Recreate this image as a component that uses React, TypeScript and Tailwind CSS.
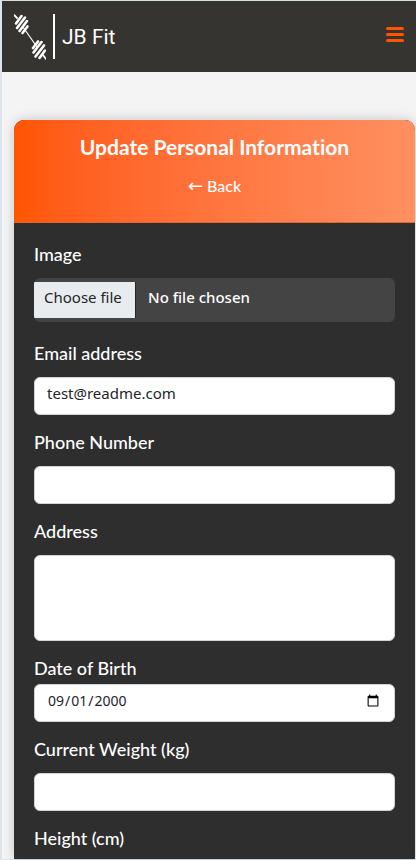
import { useId, useState } from "react";
import type { InputHTMLAttributes } from "react";

const controlClass =
  "block w-full rounded-md border border-[#ced4da] bg-white px-3 font-['Noto_Sans',sans-serif] font-normal text-[#212529]";

const labelClass = "h-[27px] leading-[22px]";

function Logo() {
  return (
    <a href="#" aria-label="JB Fit home" className="flex h-[46px] items-center gap-[7px] text-white">
      <svg width="32" height="46" viewBox="0 0 32 46" fill="none" stroke="currentColor" strokeLinecap="round">
        <path d="M9 13 23 33" strokeWidth="1.2" />
        <path d="M0 1 3 4M29 41 32 45" strokeWidth="1.8" />
        <path d="M2 9.500 7.500 2M3 14 11 3.500M5.500 17 13 7M8.500 19 13.500 12.500" strokeWidth="2.6" />
        <path d="M19 34 24 27.500M19.500 38.500 27.500 28M21.500 42.500 30 31.500M25.500 44 31 36.500" strokeWidth="2.6" />
      </svg>
      <span className="h-[45px] w-0.5 bg-white" />
      <span className="font-['Roboto',sans-serif] text-[21px] leading-[46px] whitespace-nowrap">JB Fit</span>
    </a>
  );
}

type FieldProps = InputHTMLAttributes<HTMLInputElement> & { label: string; tight?: boolean };

function Field({ label, tight, type, ...rest }: FieldProps) {
  const id = useId();
  return (
    <div className={tight ? "flex flex-col" : "flex flex-col gap-2"}>
      <label htmlFor={id} className={labelClass}>
        {label}
      </label>
      <input
        id={id}
        type={type}
        className={`${controlClass} h-[38px] ${type === "date" ? "pb-1 text-sm" : "pb-1.5 text-[15px]"}`}
        {...rest}
      />
    </div>
  );
}

function ImageField() {
  const id = useId();
  const [name, setName] = useState("No file chosen");
  return (
    <div className="mb-1 flex flex-col gap-2">
      <label htmlFor={id} className={labelClass}>
        Image
      </label>
      <label
        htmlFor={id}
        className="relative flex h-11 cursor-pointer items-center overflow-hidden rounded-md bg-[#444444] font-['Noto_Sans',sans-serif] text-[15px]"
      >
        <input
          id={id}
          type="file"
          className="sr-only"
          onChange={(e) => setName(e.target.files?.[0]?.name ?? "No file chosen")}
        />
        <span className="flex h-9 w-[102px] items-center border-r border-[#212529] bg-[#e9ecef] pb-1 pl-[10px] font-normal text-[#212529]">
          Choose file
        </span>
        <span className="px-3 pb-1">{name}</span>
      </label>
    </div>
  );
}

export default function App() {
  const addressId = useId();
  return (
    <div className="min-h-screen border-t border-b border-l-2 border-t-[#d5e0e0] border-b-[#dde4ea] border-l-[#dde4ea] bg-[#f4f4f4] font-['Lato',sans-serif] [font-variant-ligatures:none]">
      <header className="flex h-[71px] items-center justify-between bg-[#363430] px-3">
        <Logo />
        <button type="button" aria-label="Toggle navigation" className="flex w-[18px] flex-col gap-[3px] pb-1 text-[#ff5500]">
          <span className="h-[3px] rounded-xs bg-current" />
          <span className="h-[3px] rounded-xs bg-current" />
          <span className="h-[3px] rounded-xs bg-current" />
        </button>
      </header>
      <main className="pt-12 pr-px pl-3">
        <section className="overflow-hidden rounded-t-[10px] bg-[#2e2e2e] text-white shadow-[0_0_12px_rgba(0,0,0,0.2)]">
          <div className="flex h-[103px] flex-col items-center gap-3 border-b border-[#e0662f] bg-linear-to-r from-[#ff5500] to-[#ff9060] pt-3">
            <h1 className="text-[21px] leading-[30px] font-bold">Update Personal Information</h1>
            <a href="#" className="flex items-center gap-1 text-base leading-6 font-medium">
              <span className="font-['DejaVu_Sans',sans-serif] text-lg leading-6 font-normal">←</span>
              Back
            </a>
          </div>
          <form className="flex flex-col gap-4 px-5 pt-5 pb-[5px] text-lg font-medium">
            <ImageField />
            <Field label="Email address" type="email" defaultValue="test@readme.com" />
            <Field label="Phone Number" type="tel" />
            <div className="flex flex-col gap-2">
              <label htmlFor={addressId} className={labelClass}>
                Address
              </label>
              <textarea id={addressId} className={`${controlClass} h-[86px] resize-none py-1.5 text-[15px]`} />
            </div>
            <Field label="Date of Birth" tight type="date" defaultValue="2000-09-01" />
            <Field label="Current Weight (kg)" type="text" inputMode="decimal" />
            <p className={labelClass}>Height (cm)</p>
          </form>
        </section>
      </main>
    </div>
  );
}
